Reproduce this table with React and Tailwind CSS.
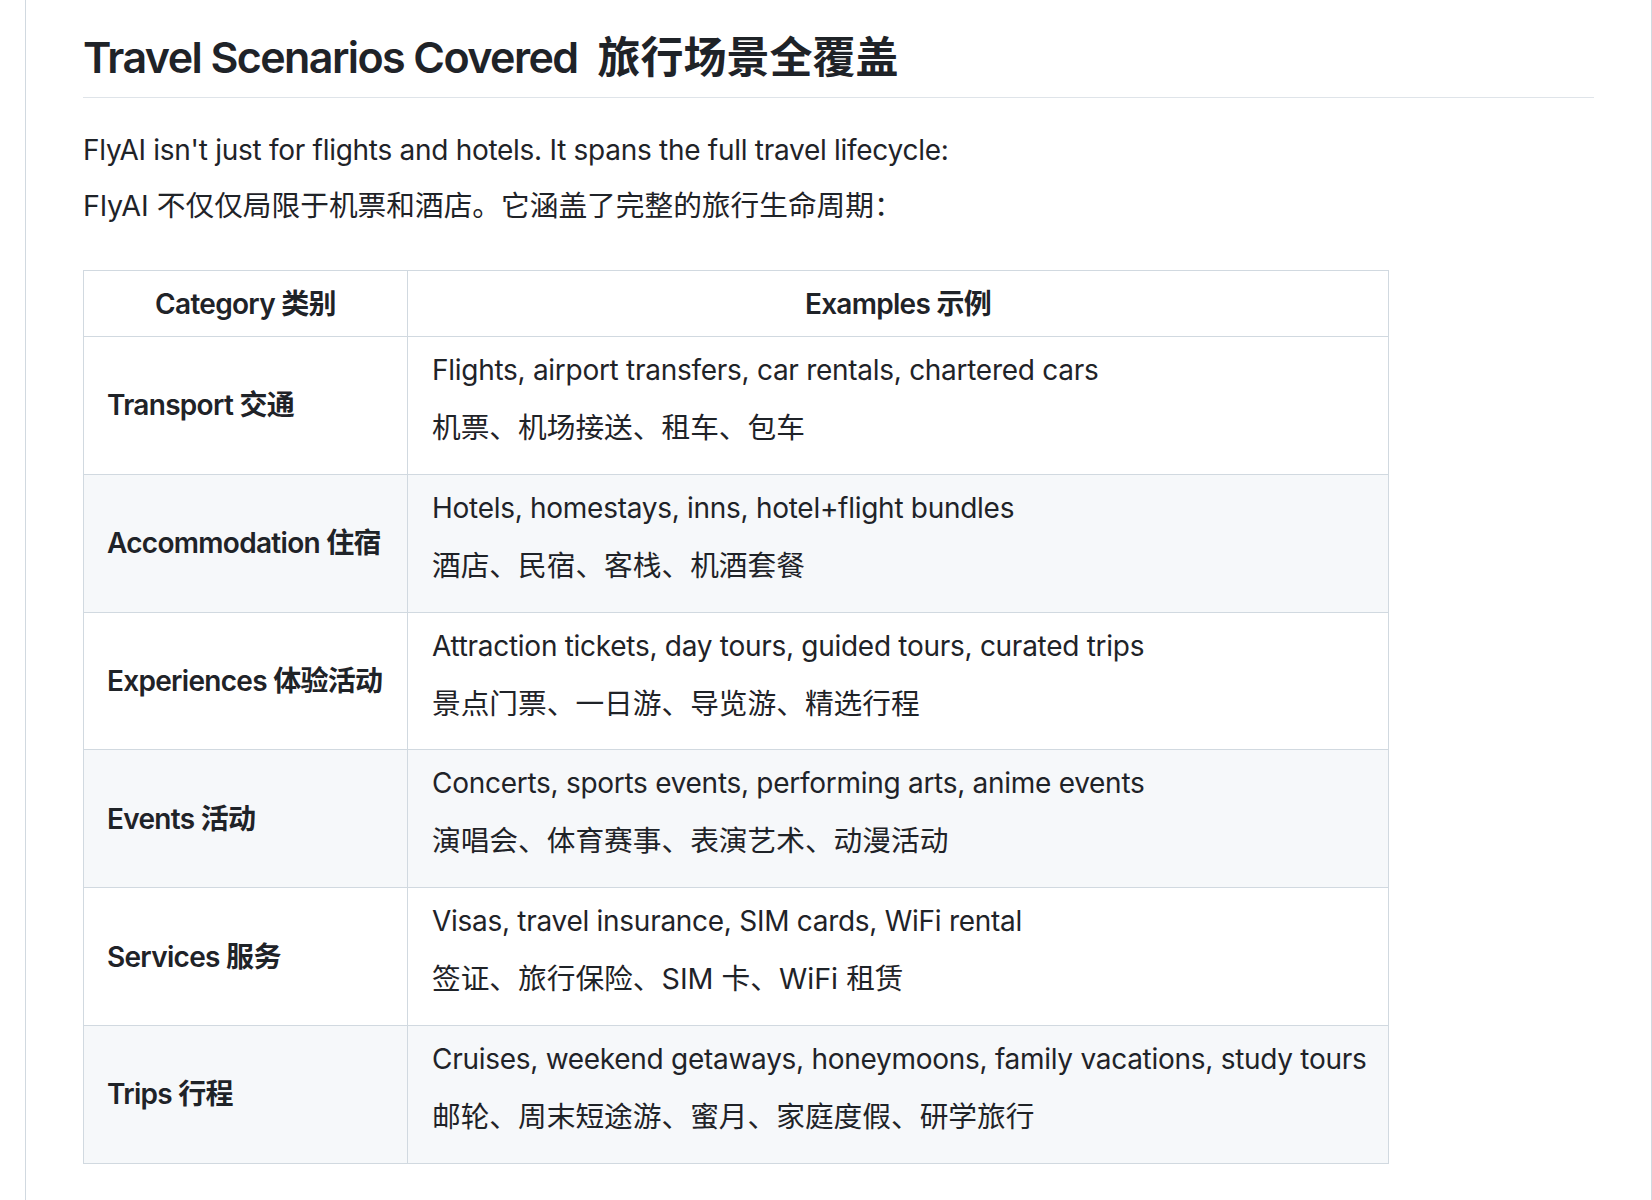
import React from "react";

const rows = [
  { cat: "Transport 交通", en: "Flights, airport transfers, car rentals, chartered cars", zh: "机票、机场接送、租车、包车" },
  { cat: "Accommodation 住宿", en: "Hotels, homestays, inns, hotel+flight bundles", zh: "酒店、民宿、客栈、机酒套餐" },
  { cat: "Experiences 体验活动", en: "Attraction tickets, day tours, guided tours, curated trips", zh: "景点门票、一日游、导览游、精选行程" },
  { cat: "Events 活动", en: "Concerts, sports events, performing arts, anime events", zh: "演唱会、体育赛事、表演艺术、动漫活动" },
  { cat: "Services 服务", en: "Visas, travel insurance, SIM cards, WiFi rental", zh: "签证、旅行保险、SIM 卡、WiFi 租赁" },
  { cat: "Trips 行程", en: "Cruises, weekend getaways, honeymoons, family vacations, study tours", zh: "邮轮、周末短途游、蜜月、家庭度假、研学旅行" },
];

export default function App() {
  return (
    <div className="min-h-screen bg-white">
      <div className="ml-[25px] min-h-[1200px] border-x border-[#d1d9e0] px-[57px] text-[28px] tracking-[-0.01em] text-[#1f2328] font-['Inter','Noto_Sans_CJK_SC',sans-serif]">
        {/* Heading */}
        <h1 className="pt-[30px] pb-[12px] border-b border-[#d1d9e0b3] text-[43px] leading-[55px] font-semibold whitespace-nowrap">
          <span className="tracking-[-0.037em]">Travel Scenarios Covered</span>
          <span className="ml-[20px] tracking-normal">旅行场景全覆盖</span>
        </h1>

        <p className="mt-[32px] leading-[40px]">
          FlyAI isn't just for flights and hotels. It spans the full travel lifecycle:
        </p>
        <p className="mt-[16px] leading-[40px] text-[28.7px] tracking-normal">
          FlyAI 不仅仅局限于机票和酒店。它涵盖了完整的旅行生命周期：
        </p>

        {/* Table */}
        <table className="mt-[44px] w-[1305px] table-fixed border-collapse">
          <thead>
            <tr className="bg-white">
              <th className="w-[324px] h-[66px] border border-[#d1d9e0] px-[23px] text-center font-semibold leading-[40px] tracking-[-0.025em]">
                Category 类别
              </th>
              <th className="w-[981px] h-[66px] border border-[#d1d9e0] px-[24px] text-center font-semibold leading-[40px] tracking-[-0.025em]">
                Examples 示例
              </th>
            </tr>
          </thead>
          <tbody>
            {rows.map((r, i) => (
              <tr key={r.cat} className={i % 2 === 1 ? "bg-[#f6f8fa]" : "bg-white"}>
                <td className="h-[137.8px] border border-[#d1d9e0] px-[23px] align-middle font-semibold leading-[40px] tracking-[-0.025em] whitespace-nowrap">
                  {r.cat}
                </td>
                <td className="h-[137.8px] border border-[#d1d9e0] px-[24px] pt-[13px] align-top leading-[40px] whitespace-nowrap">
                  <div>{r.en}</div>
                  <div className="mt-[18px] text-[28.7px] tracking-normal">{r.zh}</div>
                </td>
              </tr>
            ))}
          </tbody>
        </table>
      </div>
    </div>
  );
}
